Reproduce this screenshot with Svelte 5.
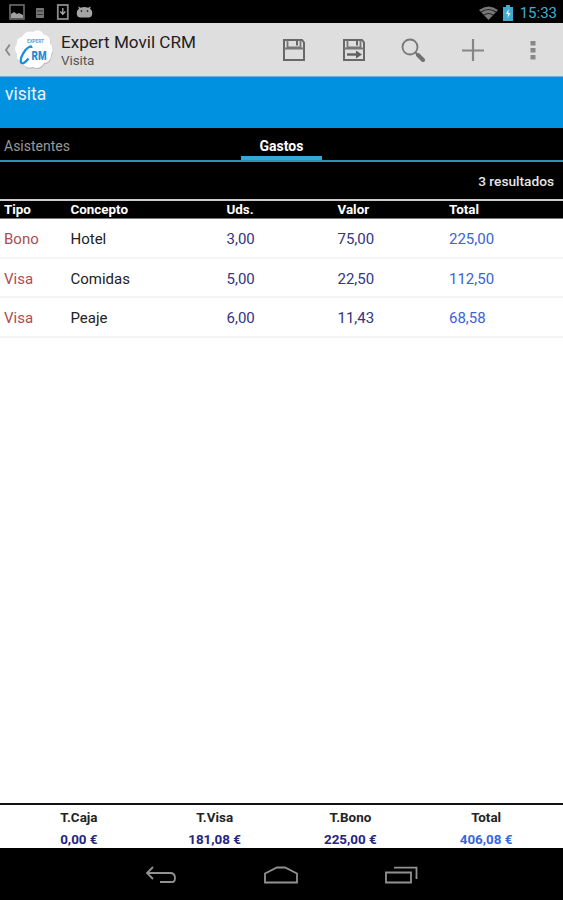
<script>
    let columns = ["Tipo", "Concepto", "Uds.", "Valor", "Total"];

    let expenses = [
        { type: "Bono", concept: "Hotel", units: "3,00", value: "75,00", total: "225,00" },
        { type: "Visa", concept: "Comidas", units: "5,00", value: "22,50", total: "112,50" },
        { type: "Visa", concept: "Peaje", units: "6,00", value: "11,43", total: "68,58" },
    ];

    let totals = [
        { label: "T.Caja", amount: "0,00 €" },
        { label: "T.Visa", amount: "181,08 €" },
        { label: "T.Bono", amount: "225,00 €" },
        { label: "Total", amount: "406,08 €", grand: true },
    ];
</script>

<div class="screen">
    <div class="status">
        <svg width="100" height="23" viewBox="0 0 100 23">
            <rect x="10" y="5" width="14" height="14" fill="none" stroke="#757575" stroke-width="1.5" />
            <path d="M11 18v-4l3-2 3 2 2-1 4 2v3z" fill="#a0a0a0" />
            <rect x="36" y="8" width="8" height="10" rx="1" fill="#777" />
            <path d="M37 11h6M37 14.5h6" stroke="#333" />
            <rect x="57.8" y="5" width="10" height="14" fill="none" stroke="#8c8c8c" stroke-width="1.8" />
            <path d="M62.8 8v6M60.3 11.5l2.5 2.7 2.5-2.7" fill="none" stroke="#aaa" stroke-width="1.3" />
            <path d="M77 11q-1 6 3 6.500h9q4-.5 3-6.500l-2-2.500 1-2-3 1.200q-4-1.200-7 0l-3-1.200 1 2z" fill="#a5a5a5" />
            <circle cx="81.500" cy="11" r=".9" fill="#333" />
            <circle cx="87.500" cy="11" r=".9" fill="#333" />
        </svg>
        <div class="system">
            <svg width="19" height="16" viewBox="0 0 19 16">
                <path d="M0 5Q9.500-2 19 5L9.500 15z" fill="#777" />
                <path d="M2 7q7.500-5 15 0M5 10q4.500-3 9 0" fill="none" stroke="#222" stroke-width="1.200" />
            </svg>
            <svg class="battery" width="10" height="16" viewBox="0 0 10 16">
                <path d="M0 2h3V0h4v2h3v14H0z" fill="#43a9cf" />
                <path d="M5.500 4L3 9h2l-.5 4L7.500 8h-2z" fill="#e6faff" />
            </svg>
            <span>15:33</span>
        </div>
    </div>

    <div class="action-bar">
        <svg class="back" width="8" height="16" viewBox="0 0 8 16">
            <path d="M6.800 2.500L3 8l3.800 5.500" fill="none" stroke="#8b8b8b" stroke-width="1.900" />
        </svg>
        <svg class="logo" width="42" height="42" viewBox="0 0 42 42">
            <path
                d="M4 15Q3 9 9 8Q13 1 20 3Q27-1 31 6Q38 7 37 14Q42 20 38 26Q38 33 31 34Q27 41 20 38Q12 40 10 34Q3 32 4 25Q0 20 4 15z"
                fill="#bcbcbc" transform="translate(.5 1.200)" />
            <path
                d="M4 15Q3 9 9 8Q13 1 20 3Q27-1 31 6Q38 7 37 14Q42 20 38 26Q38 33 31 34Q27 41 20 38Q12 40 10 34Q3 32 4 25Q0 20 4 15z"
                fill="#fff" />
            <text class="logo-small" x="14" y="13.5" textLength="17" lengthAdjust="spacingAndGlyphs">EXPERT</text>
            <path d="M18.500 19q0-4-6 2-6 8-4.500 12.500 2.500 2.500 7.500-4" fill="none" stroke="#1690dc" stroke-width="2.200" />
            <text class="logo-main" x="18.5" y="30.5" textLength="15" lengthAdjust="spacingAndGlyphs">RM</text>
        </svg>
        <div class="titles">
            <div class="title">Expert Movil CRM</div>
            <div class="subtitle">Visita</div>
        </div>
        <div class="actions">
            <svg width="24" height="24" viewBox="0 0 24 24">
                <path d="M2 2h18l2 2.500V22H2z" fill="none" stroke="#686868" stroke-width="2" />
                <path d="M5.500 2v7.500h13V2M2 10.500h20" fill="none" stroke="#777" stroke-width="1.800" />
                <path d="M15 3v4.500" stroke="#666" stroke-width="2" />
            </svg>
            <svg width="24" height="24" viewBox="0 0 24 24">
                <path d="M2 2h18l2 2.500V22H2z" fill="none" stroke="#686868" stroke-width="2" />
                <path d="M5.500 2v7.500h13V2M2 10.500h20" fill="none" stroke="#777" stroke-width="1.800" />
                <path d="M15 3v4.500" stroke="#666" stroke-width="2" />
                <path d="M5 16.500h11" stroke="#606060" stroke-width="2.400" />
                <path d="M14 12.500l6 4-6 4z" fill="#606060" />
            </svg>
            <svg width="24" height="24" viewBox="0 0 24 24">
                <circle cx="9" cy="9" r="7.500" fill="none" stroke="#777" stroke-width="1.800" />
                <path d="M14 14l3 3" stroke="#777" stroke-width="2" />
                <path d="M17 17l5 5" stroke="#707070" stroke-width="4" stroke-linecap="round" />
            </svg>
            <svg width="24" height="24" viewBox="0 0 24 24">
                <path d="M12 1v22M1 12.500h22" stroke="#858585" stroke-width="2.200" />
            </svg>
            <svg width="24" height="24" viewBox="0 0 24 24">
                <path d="M9.500 3h5v4.500h-5zM9.500 10h5v4.500h-5zM9.500 17h5v4.500h-5z" fill="#888" />
            </svg>
        </div>
    </div>

    <div class="banner">visita</div>

    <div class="tabs">
        <div class="tab">Asistentes</div>
        <div class="tab active">Gastos</div>
        <div class="tab"></div>
    </div>

    <div class="results">3 resultados</div>

    <div class="row head">
        {#each columns as column}
            <span>{column}</span>
        {/each}
    </div>
    <div class="list">
        {#each expenses as expense}
            <div class="row">
                <span class="type">{expense.type}</span>
                <span>{expense.concept}</span>
                <span class="number">{expense.units}</span>
                <span class="number">{expense.value}</span>
                <span class="total">{expense.total}</span>
            </div>
        {/each}
    </div>

    <div class="totals">
        {#each totals as item}
            <div class="sum">
                <div>{item.label}</div>
                <div class="amount" class:grand={item.grand}>{item.amount}</div>
            </div>
        {/each}
    </div>

    <div class="nav">
        <svg width="32" height="20" viewBox="0 0 32 20">
            <path d="M8 1L2 7l6 6M2 7h23q5 0 5 5t-5 4H15" fill="none" stroke="#929292" stroke-width="1.800" />
        </svg>
        <svg width="36" height="20" viewBox="0 0 36 20">
            <path d="M2 16.500V7.500L14 1.500h8l12 6v9z" fill="none" stroke="#929292" stroke-width="1.800" />
        </svg>
        <svg width="33" height="20" viewBox="0 0 33 20">
            <path d="M1 6.500h25v10H1zM9 1.700h22.500V13" fill="none" stroke="#929292" stroke-width="1.800" />
        </svg>
    </div>
</div>

<style>
    :global(body) {
        margin: 0;
    }

    .screen {
        width: 563px;
        height: 900px;
        display: flex;
        flex-direction: column;
        overflow: hidden;
        background-color: white;
        font-family: Roboto, "Liberation Sans", sans-serif;
        font-size: 14px;
        line-height: 18px;
        color: #222;
    }

    svg {
        display: block;
        flex-shrink: 0;
    }

    .status {
        height: 23px;
        display: flex;
        justify-content: space-between;
        background-color: black;
    }

    .system {
        display: flex;
        align-items: center;
        padding: 2px 6px 0 0;
        color: #43add3;
        font-size: 15px;
    }

    .battery {
        margin: 0 7px 0 5px;
    }

    .action-bar {
        height: 54px;
        display: flex;
        align-items: center;
        box-sizing: border-box;
        border-bottom: 1px solid #6eb3dc;
        background-color: #dedede;
    }

    .back {
        margin-left: 3px;
    }

    .logo {
        margin-left: 2px;
    }

    .logo-small {
        font-size: 5.5px;
        font-weight: bold;
        fill: #48a9df;
    }

    .logo-main {
        font-size: 12.5px;
        font-weight: 900;
        fill: #1690dc;
    }

    .titles {
        flex: 1;
        padding: 2px 0 0 6px;
        white-space: nowrap;
    }

    .title {
        font-size: 17.1px;
        line-height: 19px;
    }

    .subtitle {
        font-size: 13.5px;
        line-height: 17px;
        letter-spacing: -0.1px;
        color: #555;
    }

    .actions {
        width: 299px;
        display: grid;
        grid-template-columns: repeat(5, 1fr);
        justify-items: center;
    }

    .banner {
        height: 51px;
        padding: 7px 5px 0;
        box-sizing: border-box;
        background-color: #0191e1;
        color: #e8f6ff;
        font-size: 17.5px;
        line-height: 20px;
    }

    .tabs {
        height: 34px;
        display: grid;
        grid-template-columns: 241px 81px 1fr;
        box-sizing: border-box;
        border-bottom: 2px solid #2b93b8;
        background-color: black;
        color: #999;
    }

    .tab {
        padding: 9px 4px 0;
    }

    .active {
        border-bottom: 4px solid #33a9d4;
        font-weight: bold;
        color: white;
        text-align: center;
    }

    .results {
        height: 37px;
        padding: 10px 9px 0 0;
        box-sizing: border-box;
        background-color: black;
        color: #e8e8e8;
        font-size: 13.7px;
        font-weight: 500;
        text-align: right;
    }

    .row {
        height: 39.5px;
        display: grid;
        grid-template-columns: 66.5px 156px 111px 111.5px 1fr;
        align-items: center;
        box-sizing: border-box;
        padding: 3px 0 0 4px;
        border-bottom: 2px solid #f4f4f4;
        font-size: 15px;
    }

    .head {
        height: 20px;
        padding-top: 0;
        border-top: 2px solid #ccc;
        border-bottom: 1px solid #777;
        background-color: black;
        color: white;
        font-size: 13.4px;
        font-weight: bold;
    }

    .list {
        flex: 1;
    }

    .type {
        color: #ad4b53;
    }

    .number {
        color: #34347f;
    }

    .total {
        color: #3b63d3;
    }

    .totals {
        height: 45px;
        padding: 2px 9px 0 11px;
        display: grid;
        grid-template-columns: repeat(4, 1fr);
        box-sizing: border-box;
        border-top: 2px solid #111;
        font-size: 13.4px;
        font-weight: bold;
        text-align: center;
    }

    .sum {
        line-height: 21.5px;
    }

    .amount {
        color: #25257e;
    }

    .grand {
        color: #3768dc;
    }

    .nav {
        height: 52px;
        padding-top: 4px;
        display: flex;
        justify-content: center;
        align-items: center;
        gap: 86px;
        box-sizing: border-box;
        background-color: black;
    }
</style>
